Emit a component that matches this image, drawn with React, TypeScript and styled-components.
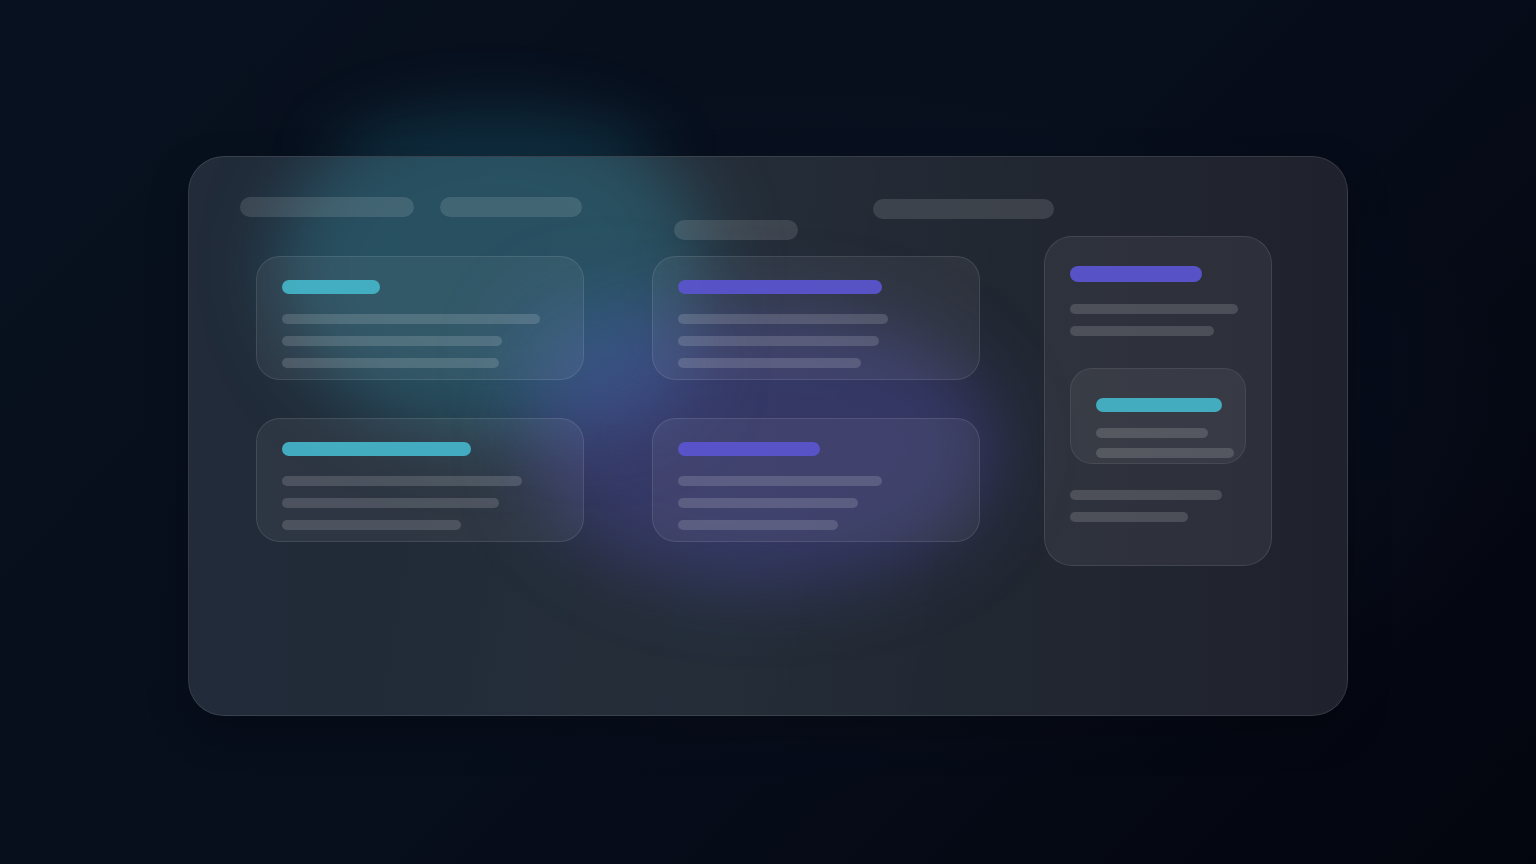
import styled, { createGlobalStyle } from 'styled-components';

const GlobalStyle = createGlobalStyle`
  html, body {
    margin: 0;
    padding: 0;
    background: #060c18;
    font-family: Inter, "Noto Sans", sans-serif;
  }
`;

type Tone = 'cyan' | 'violet';

const accent: Record<Tone, string> = {
  cyan: '#45b2c6',
  violet: '#5a54cc',
};

const Page = styled.div`
  position: relative;
  width: 1536px;
  height: 864px;
  overflow: hidden;
  display: flex;
  justify-content: center;
  padding-top: 156px;
  box-sizing: border-box;
  background:
    radial-gradient(ellipse 60% 55% at 55% 50%, #0d1426 0%, rgba(10, 16, 30, 0) 75%),
    linear-gradient(135deg, #08111f 0%, #070e1c 50%, #03050e 100%);
`;

const Glow = styled.div<{ $x: number; $y: number; $w: number; $h: number; $c: string; $blur?: number }>`
  position: absolute;
  left: ${(p) => p.$x}px;
  top: ${(p) => p.$y}px;
  width: ${(p) => p.$w}px;
  height: ${(p) => p.$h}px;
  border-radius: 50%;
  background: ${(p) => p.$c};
  filter: blur(${(p) => p.$blur ?? 36}px);
  pointer-events: none;
`;

const Panel = styled.div`
  position: relative;
  overflow: hidden;
  isolation: isolate;
  width: 1160px;
  height: 560px;
  box-sizing: border-box;
  padding-top: 40px;
  border-radius: 36px;
  border: 1px solid rgba(255, 255, 255, 0.1);
  background:
    linear-gradient(100deg, rgba(255, 255, 255, 0) 20%, rgba(255, 255, 255, 0.012) 40%, rgba(255, 255, 255, 0) 70%),
    linear-gradient(90deg, #212b39 0%, #222b36 45%, #21252f 85%, #1f222c 100%);
  box-shadow: 0 16px 40px rgba(0, 0, 0, 0.25);
`;

const GlowLayer = styled.div`
  position: absolute;
  inset: 0;
  z-index: -1;
  pointer-events: none;
`;

const Header = styled.div`
  display: flex;
  align-items: flex-start;
  height: 39px;
  margin-left: 51px;
`;

const Pill = styled.div<{ $w: number; $gap: number; $drop?: number }>`
  width: ${(p) => p.$w}px;
  height: 20px;
  margin-left: ${(p) => p.$gap}px;
  margin-top: ${(p) => p.$drop ?? 0}px;
  border-radius: 10px;
  background: rgba(255, 255, 255, 0.12);
  flex-shrink: 0;
`;

const Body = styled.div`
  display: flex;
  align-items: flex-start;
  margin-left: 67px;
`;

const CardGrid = styled.div`
  display: grid;
  grid-template-columns: 328px 328px;
  column-gap: 68px;
  row-gap: 38px;
  margin-top: 20px;
`;

const Card = styled.div`
  box-sizing: border-box;
  height: 124px;
  padding: 23px 25px 0;
  border-radius: 24px;
  border: 1px solid rgba(255, 255, 255, 0.1);
  background: rgba(255, 255, 255, 0.055);
  display: flex;
  flex-direction: column;
`;

const Accent = styled.div<{ $w: number; $tone: Tone; $h?: number }>`
  flex-shrink: 0;
  width: ${(p) => p.$w}px;
  height: ${(p) => p.$h ?? 14}px;
  border-radius: 8px;
  background: ${(p) => accent[p.$tone]};
  opacity: 0.95;
  margin-bottom: 20px;
`;

const Lines = styled.div<{ $gap?: number }>`
  flex-shrink: 0;
  display: flex;
  flex-direction: column;
  gap: ${(p) => p.$gap ?? 12}px;
`;

const Line = styled.div<{ $w: number }>`
  width: ${(p) => p.$w}px;
  height: 10px;
  border-radius: 5px;
  background: rgba(255, 255, 255, 0.15);
`;

const SideCard = styled.div`
  box-sizing: border-box;
  width: 228px;
  height: 330px;
  margin-left: 64px;
  padding: 29px 25px;
  border-radius: 28px;
  border: 1px solid rgba(255, 255, 255, 0.1);
  background: rgba(255, 255, 255, 0.06);
  display: flex;
  flex-direction: column;
`;

const InnerCard = styled.div`
  flex-shrink: 0;
  box-sizing: border-box;
  width: 176px;
  height: 96px;
  margin: 32px 0 26px;
  padding: 29px 23px 0 25px;
  border-radius: 22px;
  border: 1px solid rgba(255, 255, 255, 0.08);
  background: rgba(255, 255, 255, 0.05);
  display: flex;
  flex-direction: column;
`;

const InnerAccent = styled(Accent)`
  margin-bottom: 16px;
`;

const SideAccent = styled(Accent)`
  margin-bottom: 22px;
`;

const cards: { tone: Tone; accent: number; lines: number[] }[] = [
  { tone: 'cyan', accent: 98, lines: [258, 220, 217] },
  { tone: 'violet', accent: 204, lines: [210, 201, 183] },
  { tone: 'cyan', accent: 189, lines: [240, 217, 179] },
  { tone: 'violet', accent: 142, lines: [204, 180, 160] },
];

export default function App() {
  return (
    <>
      <GlobalStyle />
      <Page>
        <Glow $x={330} $y={110} $w={330} $h={110} $c="rgba(30, 110, 130, 0.32)" $blur={30} />
        <Panel>
          <GlowLayer>
            <Glow $x={88} $y={-60} $w={430} $h={340} $c="rgba(46, 112, 132, 0.55)" />
            <Glow $x={340} $y={150} $w={470} $h={280} $c="rgba(74, 72, 158, 0.46)" />
            <Glow $x={320} $y={135} $w={190} $h={140} $c="rgba(70, 100, 170, 0.3)" />
          </GlowLayer>
          <Header>
            <Pill $w={174} $gap={0} />
            <Pill $w={142} $gap={26} />
            <Pill $w={124} $gap={92} $drop={23} />
            <Pill $w={181} $gap={75} $drop={2} />
          </Header>
          <Body>
            <CardGrid>
              {cards.map((c, i) => (
                <Card key={i}>
                  <Accent $w={c.accent} $tone={c.tone} />
                  <Lines>
                    {c.lines.map((w, j) => (
                      <Line key={j} $w={w} />
                    ))}
                  </Lines>
                </Card>
              ))}
            </CardGrid>
            <SideCard>
              <SideAccent $w={132} $h={16} $tone="violet" />
              <Lines>
                <Line $w={168} />
                <Line $w={144} />
              </Lines>
              <InnerCard>
                <InnerAccent $w={126} $tone="cyan" />
                <Lines $gap={10}>
                  <Line $w={112} />
                  <Line $w={138} />
                </Lines>
              </InnerCard>
              <Lines>
                <Line $w={152} />
                <Line $w={118} />
              </Lines>
            </SideCard>
          </Body>
        </Panel>
      </Page>
    </>
  );
}
